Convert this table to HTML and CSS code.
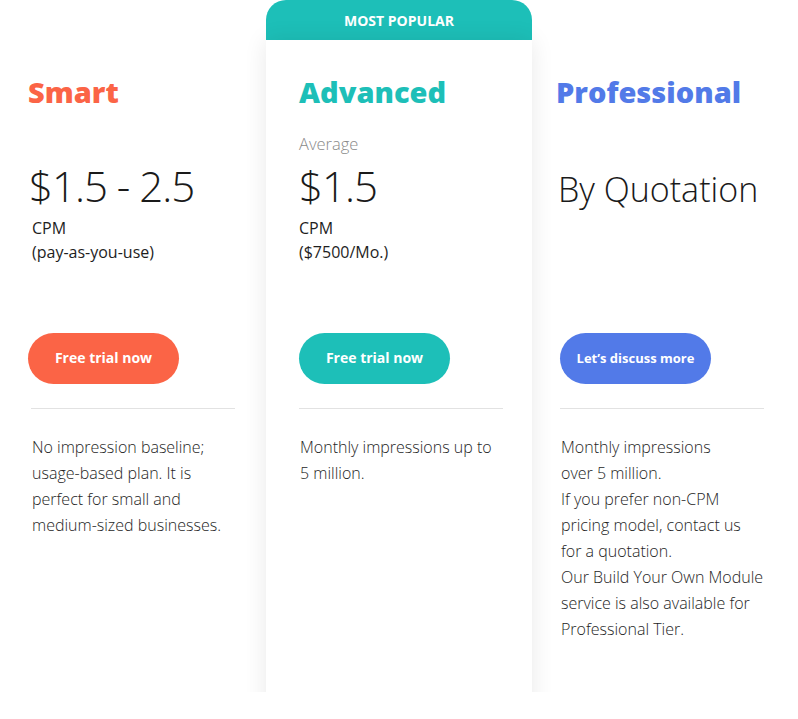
FILE: index.html
```html
<!DOCTYPE html>
<html lang="en">
<head>
<meta charset="utf-8">
<title>Pricing</title>
<link rel="stylesheet" href="styles.css">
</head>
<body>
<div class="pricing">
  <section class="plan plan-smart">
    <div class="plan-head">
      <h2 class="plan-name">Smart</h2>
      <div class="plan-sub placeholder">&nbsp;</div>
      <div class="plan-price">$1.5 - 2.5</div>
      <div class="plan-unit">CPM<br>(pay-as-you-use)</div>
    </div>
    <a class="plan-btn" href="#">Free trial now</a>
    <hr class="plan-rule">
    <p class="plan-desc">No impression baseline;<br>usage-based plan. It is<br>perfect for small and<br>medium-sized businesses.</p>
  </section>

  <section class="plan plan-advanced">
    <div class="plan-badge">MOST POPULAR</div>
    <div class="plan-card">
      <div class="plan-head">
        <h2 class="plan-name">Advanced</h2>
        <div class="plan-sub">Average</div>
        <div class="plan-price">$1.5</div>
        <div class="plan-unit">CPM<br>($7500/Mo.)</div>
      </div>
      <a class="plan-btn" href="#">Free trial now</a>
      <hr class="plan-rule">
      <p class="plan-desc">Monthly impressions up to<br>5 million.</p>
    </div>
  </section>

  <section class="plan plan-pro">
    <div class="plan-head">
      <h2 class="plan-name">Professional</h2>
      <div class="plan-sub placeholder">&nbsp;</div>
      <div class="plan-quote">By Quotation</div>
    </div>
    <a class="plan-btn btn-small" href="#">Let’s discuss more</a>
    <hr class="plan-rule">
    <p class="plan-desc">Monthly impressions<br>over 5 million.<br>If you prefer non-CPM<br>pricing model, contact us<br>for a quotation.<br>Our Build Your Own Module<br>service is also available for<br>Professional Tier.</p>
  </section>
</div>
</body>
</html>
```

FILE: styles.css
```css
html, body {
  margin: 0;
  padding: 0;
  background: #ffffff;
}

body {
  font-family: "Open Sans", "Liberation Sans", sans-serif;
  color: #1e1e1e;
}

.pricing {
  display: grid;
  grid-template-columns: 266px 266px 266px;
  height: 692px;
  overflow: hidden;
}

.plan {
  display: flex;
  flex-direction: column;
  padding-top: 40px;
}

.plan-smart {
  padding-left: 28px;
  padding-right: 31px;
}

.plan-pro {
  padding-left: 24px;
  padding-right: 34px;
}

.plan-advanced {
  padding-top: 0;
  position: relative;
  z-index: 1;
}

.plan-badge {
  height: 40px;
  line-height: 42px;
  background: #1dbfb8;
  color: #ffffff;
  text-align: center;
  font-weight: 700;
  font-size: 14px;
  border-radius: 20px 20px 0 0;
}

.plan-card {
  flex: 1;
  background: #ffffff;
  box-shadow: 0 0 22px rgba(0, 0, 0, 0.09);
  padding: 0 29px 0 33px;
  display: flex;
  flex-direction: column;
  margin-bottom: -40px;
}

.plan-head {
  height: 293px;
  display: flex;
  flex-direction: column;
}

.plan-name {
  margin: 32px 0 0;
  font-size: 29px;
  line-height: 40px;
  font-weight: 800;
}

.plan-smart .plan-name { color: #fb6446; }
.plan-advanced .plan-name { color: #1dbfb8; }
.plan-pro .plan-name { color: #527ae8; }

.plan-sub {
  margin-top: 20px;
  font-size: 16.5px;
  line-height: 24px;
  font-weight: 300;
  color: #8a8a8a;
}

.placeholder {
  visibility: hidden;
}

.plan-price {
  margin-top: 5px;
  padding-left: 1px;
  font-size: 42px;
  line-height: 50px;
  font-weight: 300;
  letter-spacing: -1px;
  color: #1a1a1a;
}

.plan-advanced .plan-price {
  padding-left: 0;
}

.plan-quote {
  margin-top: 8px;
  padding-left: 2px;
  font-size: 34px;
  line-height: 50px;
  font-weight: 300;
  color: #1a1a1a;
}

.plan-unit {
  margin-top: 5px;
  padding-left: 4px;
  font-size: 16px;
  line-height: 24px;
  font-weight: 400;
  color: #1e1e1e;
}

.plan-advanced .plan-unit {
  padding-left: 0;
}

.plan-btn {
  display: flex;
  align-items: center;
  justify-content: center;
  width: 151px;
  height: 51px;
  border-radius: 26px;
  color: #ffffff;
  text-decoration: none;
  font-weight: 700;
  font-size: 14px;
  line-height: 20px;
  padding-bottom: 2px;
  box-sizing: border-box;
  flex: none;
}

.plan-smart .plan-btn { background: #fb6446; }
.plan-advanced .plan-btn { background: #1dbfb8; }
.plan-pro .plan-btn { background: #527ae8; margin-left: 4px; }

.btn-small {
  font-size: 13px;
}

.plan-rule {
  margin: 24px 0 0 3px;
  width: 204px;
  height: 1px;
  border: 0;
  background: #e2e2e2;
}

.plan-advanced .plan-rule {
  margin-left: 0;
}

.plan-pro .plan-rule {
  margin-left: 4px;
}

.plan-desc {
  margin: 25px 0 0 4px;
  font-size: 16px;
  line-height: 26px;
  font-weight: 300;
  color: #1e1e1e;
}

.plan-advanced .plan-desc {
  margin-left: 1px;
}

.plan-pro .plan-desc {
  margin-left: 5px;
}
```
